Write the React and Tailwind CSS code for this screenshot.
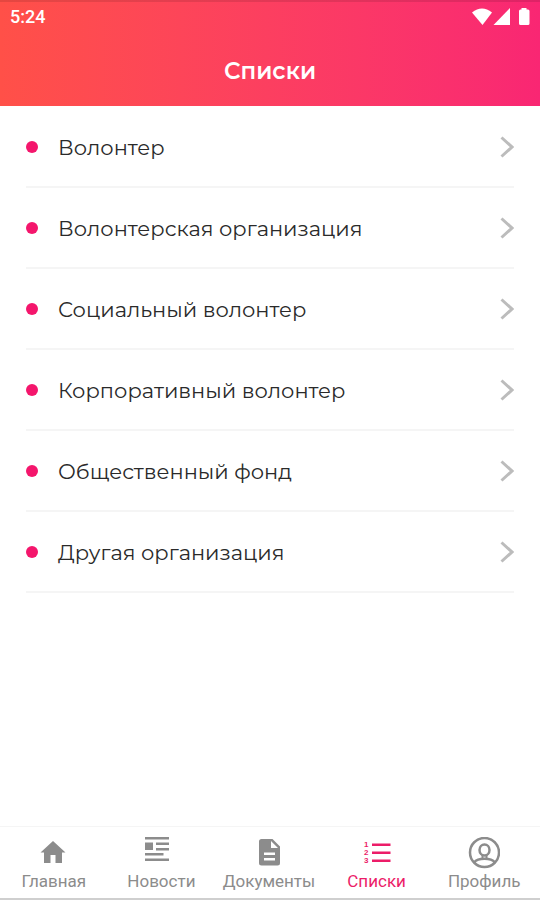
import { useState } from 'react';

const LISTS = [
  'Волонтер',
  'Волонтерская организация',
  'Социальный волонтер',
  'Корпоративный волонтер',
  'Общественный фонд',
  'Другая организация',
];

const HomeIcon = () => (
  <svg viewBox="0 0 32 32" className="size-8" fill="currentColor" aria-hidden="true">
    <path d="M15 4 27.500 15.500H24V26H17.500V18H12.500V26H6V15.500H2.500Z" />
  </svg>
);

const NewsIcon = () => (
  <svg viewBox="0 0 32 32" className="size-8" fill="currentColor" aria-hidden="true">
    <path d="M0 0H24V2.500H0ZM0 5.500H8V13H0ZM11 5.500H24V8H11ZM11 11H24V13.500H11ZM0 16H18.500V18.500H0ZM0 21.500H24V24H0Z" />
  </svg>
);

const DocsIcon = () => (
  <svg viewBox="0 0 32 32" className="size-8" fill="currentColor" aria-hidden="true">
    <path
      fillRule="evenodd"
      d="M8.500 2H19.500L27 9.500V26Q27 28.500 24.500 28.500H8.500Q6 28.500 6 26V4.500Q6 2 8.500 2ZM18 4V11H25ZM11 15.500V18H22V15.500ZM11 21V23.500H22V21Z"
    />
  </svg>
);

const ListsIcon = () => (
  <svg viewBox="0 0 32 32" className="size-8" fill="currentColor" aria-hidden="true">
    <path d="M11 6.500H29.500V9H11ZM11 14.500H29.500V17H11ZM11 22.500H29.500V25H11Z" />
    <g fontFamily="Liberation Sans, sans-serif" fontSize="8" fontWeight="bold">
      <text x="3" y="10">1</text>
      <text x="3" y="18">2</text>
      <text x="3" y="26">3</text>
    </g>
  </svg>
);

const ProfileIcon = () => (
  <svg viewBox="0 0 32 32" className="size-8" fill="none" stroke="currentColor" strokeWidth="2.500" aria-hidden="true">
    <circle cx="16.500" cy="15.500" r="14.500" />
    <ellipse cx="16.500" cy="13" rx="5" ry="5.500" />
    <path d="M14.500 18V21.500M18.500 18V21.500" strokeWidth="2" />
    <path d="M6 25.500C8.500 22.500 12.500 21.800 16.500 21.800S24.500 22.500 27 25.500" />
  </svg>
);

const TABS = [
  { id: 'home', label: 'Главная', Icon: HomeIcon },
  { id: 'news', label: 'Новости', Icon: NewsIcon },
  { id: 'docs', label: 'Документы', Icon: DocsIcon },
  { id: 'lists', label: 'Списки', Icon: ListsIcon },
  { id: 'profile', label: 'Профиль', Icon: ProfileIcon },
];

function StatusBar() {
  return (
    <div className="flex h-8 items-center justify-between border-t-2 border-black/10 px-2.5">
      <span className="font-['Roboto',sans-serif] text-lg font-medium">5:24</span>
      <svg viewBox="0 0 58 18" className="h-[18px] w-[58px]" fill="currentColor" aria-hidden="true">
        <path d="M0 4.500Q10 -3.500 20 4.500L10.500 17Z" />
        <path d="M38 0V17H21.500Z" />
        <path d="M49.500 0H54.500V1.500H56Q57.500 1.500 57.500 3V15.500Q57.500 17 56 17H48.500Q47 17 47 15.500V3Q47 1.500 48.500 1.500H49.500Z" />
      </svg>
    </div>
  );
}

export default function App() {
  const [active, setActive] = useState('lists');

  return (
    <div className="flex min-h-screen flex-col bg-white font-['Montserrat','Inter',sans-serif]">
      <header className="bg-linear-to-r from-[#ff5048] to-[#f92673] text-white">
        <StatusBar />
        <h1 className="pb-[19px] pt-[23px] text-center text-[23px] font-semibold leading-8">Списки</h1>
      </header>

      <main className="flex-1 px-[26px] pt-px">
        <ul>
          {LISTS.map(name => (
            <li key={name} className="border-b-2 border-[#f5f5f5]">
              <button type="button" className="flex h-[79px] w-full items-center text-left">
                <span className="size-3 shrink-0 rounded-full bg-[#f4166c]" />
                <span className="ml-5 mt-0.5 flex-1 text-[21px] text-[#2a2a2a]">{name}</span>
                <svg viewBox="0 0 14 22" className="h-[22px] w-3.5 text-[#bcbcbc]" fill="none" stroke="currentColor" strokeWidth="3" aria-hidden="true">
                  <path d="M1.500 1.500 12 11 1.500 20.500" />
                </svg>
              </button>
            </li>
          ))}
        </ul>
      </main>

      <nav className="grid grid-cols-5 border-b-2 border-t border-b-[#cfcfcf] border-t-[#f5f5f5] pb-1 pr-0.5 pt-2.5">
        {TABS.map(({ id, label, Icon }) => (
          <button
            key={id}
            type="button"
            onClick={() => setActive(id)}
            className={`flex flex-col items-center font-['Roboto',sans-serif] text-[17px] leading-[25px] ${
              active === id ? 'text-[#ec1c68]' : 'text-[#8c8c8c]'
            }`}
          >
            <Icon />
            {label}
          </button>
        ))}
      </nav>
    </div>
  );
}
